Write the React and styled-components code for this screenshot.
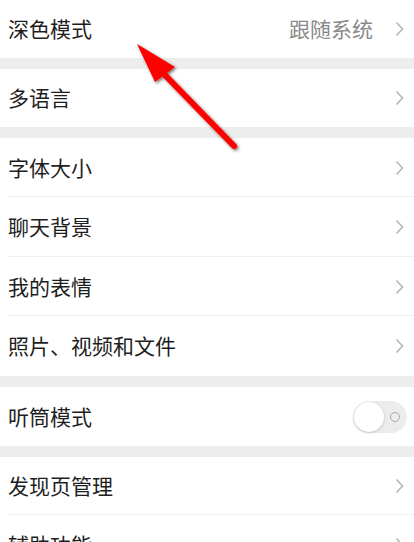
import styled, { createGlobalStyle } from 'styled-components'

const Global = createGlobalStyle`
  html, body { margin: 0; padding: 0; background: #ededed; }
  body { font-family: "Noto Sans CJK SC", "Noto Sans", sans-serif; }
`

const Page = styled.div`
  position: relative;
  width: 414px;
  height: 542px;
  overflow: hidden;
  background: #ededed;
`

const Group = styled.div`
  background: #fff;
  margin-bottom: 11px;
`

const Row = styled.div`
  position: relative;
  height: ${p => p.$h || 59}px;
  display: flex;
  align-items: center;
  padding: 0 8px;
  box-sizing: border-box;
  &:not(:last-child)::after {
    content: "";
    position: absolute;
    left: 8px;
    right: 0;
    bottom: 0;
    height: 1px;
    background: #efefef;
  }
`

const Label = styled.span`
  flex: 1;
  font-size: 21px;
  line-height: 1;
  color: #1e1e1e;
  margin-top: -1px;
`

const Value = styled.span`
  font-size: 21px;
  line-height: 1;
  color: #8a8a8a;
  margin-right: 22px;
  margin-top: -1px;
`

const Chevron = styled.svg`
  width: 9px;
  height: 16px;
  margin-right: 2px;
`

const Toggle = styled.div`
  position: relative;
  width: 54px;
  height: 32px;
  border-radius: 16px;
  background: #ececec;
  margin-right: -1px;
`

const Knob = styled.div`
  position: absolute;
  left: 1px;
  top: 1px;
  width: 30px;
  height: 30px;
  border-radius: 50%;
  background: #fff;
  box-shadow: 0 1px 3px rgba(0,0,0,0.18);
`

const OffRing = styled.div`
  position: absolute;
  right: 7px;
  top: 11px;
  width: 8px;
  height: 8px;
  border-radius: 50%;
  border: 1.5px solid #a8a8a8;
`

const Arrow = styled.svg`
  position: absolute;
  left: 0;
  top: 0;
  pointer-events: none;
`

const Arr = () => (
  <Chevron viewBox="0 0 9 16">
    <path d="M1.5 1.5 L7.5 8 L1.5 14.5" fill="none" stroke="#b5b5b5" strokeWidth="1.6" />
  </Chevron>
)

const Item = ({ label, value, h }) => (
  <Row $h={h}>
    <Label>{label}</Label>
    {value && <Value>{value}</Value>}
    <Arr />
  </Row>
)

export default function App() {
  return (
    <>
      <Global />
      <Page>
        <Group>
          <Item label="深色模式" value="跟随系统" h={58} />
        </Group>
        <Group>
          <Item label="多语言" h={58} />
        </Group>
        <Group>
          <Item label="字体大小" />
          <Item label="聊天背景" h={60} />
          <Item label="我的表情" />
          <Item label="照片、视频和文件" h={60} />
        </Group>
        <Group>
          <Row $h={59}>
            <Label>听筒模式</Label>
            <Toggle>
              <Knob />
              <OffRing />
            </Toggle>
          </Row>
        </Group>
        <Group>
          <Item label="发现页管理" h={58} />
          <Item label="辅助功能" />
        </Group>
        <Arrow width="414" height="542" viewBox="0 0 414 542">
          <defs>
            <filter id="sh" x="-20%" y="-20%" width="140%" height="140%">
              <feDropShadow dx="1.5" dy="1.5" stdDeviation="1.6" floodColor="#000" floodOpacity="0.55" />
            </filter>
          </defs>
          <g filter="url(#sh)">
            <line x1="162" y1="72" x2="234" y2="146" stroke="#ff0000" strokeWidth="6" strokeLinecap="round" />
            <polygon points="137,44 175,67 155,82" fill="#ff0000" />
          </g>
        </Arrow>
      </Page>
    </>
  )
}
